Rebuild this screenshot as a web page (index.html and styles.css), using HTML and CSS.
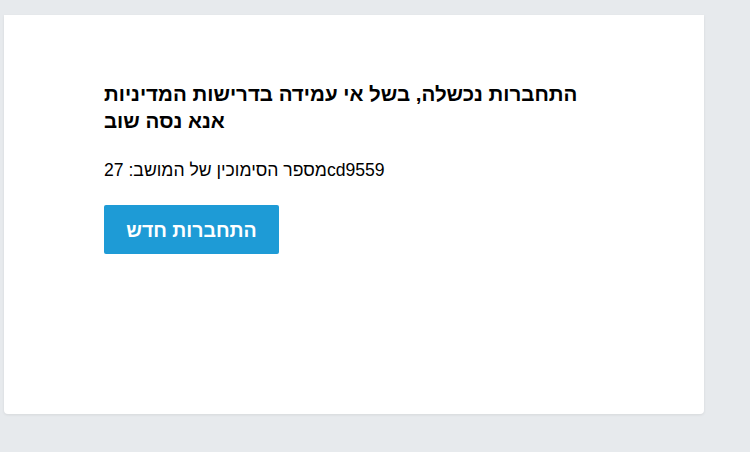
FILE: index.html
```html
<!DOCTYPE html>
<html lang="he">
<head>
<meta charset="utf-8">
<link rel="stylesheet" href="styles.css">
</head>
<body>
<div class="card">
  <div class="content">
    <h1 class="title">התחברות נכשלה, בשל אי עמידה בדרישות המדיניות אנא נסה שוב</h1>
    <p class="ref">מספר הסימוכין של המושב: 27cd9559</p>
    <button class="btn">התחברות חדש</button>
  </div>
</div>
</body>
</html>
```
FILE: styles.css
```css
html, body {
  margin: 0;
  padding: 0;
}
body {
  background: #e7eaed;
  font-family: "Liberation Sans", Arial, sans-serif;
  color: #000;
  height: 452px;
  overflow: hidden;
}
.card {
  margin: 15px 0 0 4px;
  width: 700px;
  height: 399px;
  background: #fff;
  border-radius: 0 0 4px 4px;
  box-shadow: 0 1px 3px rgba(0,0,0,0.08);
  box-sizing: border-box;
  padding: 65px 100px 0 100px;
}
.content {
  width: 490px;
}
.title {
  font-size: 20.5px;
  font-weight: bold;
  line-height: 27px;
  margin: 0;
}
.ref {
  font-size: 17.6px;
  margin: 24px 0 0 0;
  line-height: 24px;
}
.btn {
  display: block;
  margin-top: 23px;
  width: 175px;
  height: 49px;
  background: #1e9bd6;
  color: #fff;
  border: none;
  border-radius: 2px;
  font-family: inherit;
  font-size: 19.5px;
  font-weight: bold;
  padding: 2px 0 0 0;
}
```
